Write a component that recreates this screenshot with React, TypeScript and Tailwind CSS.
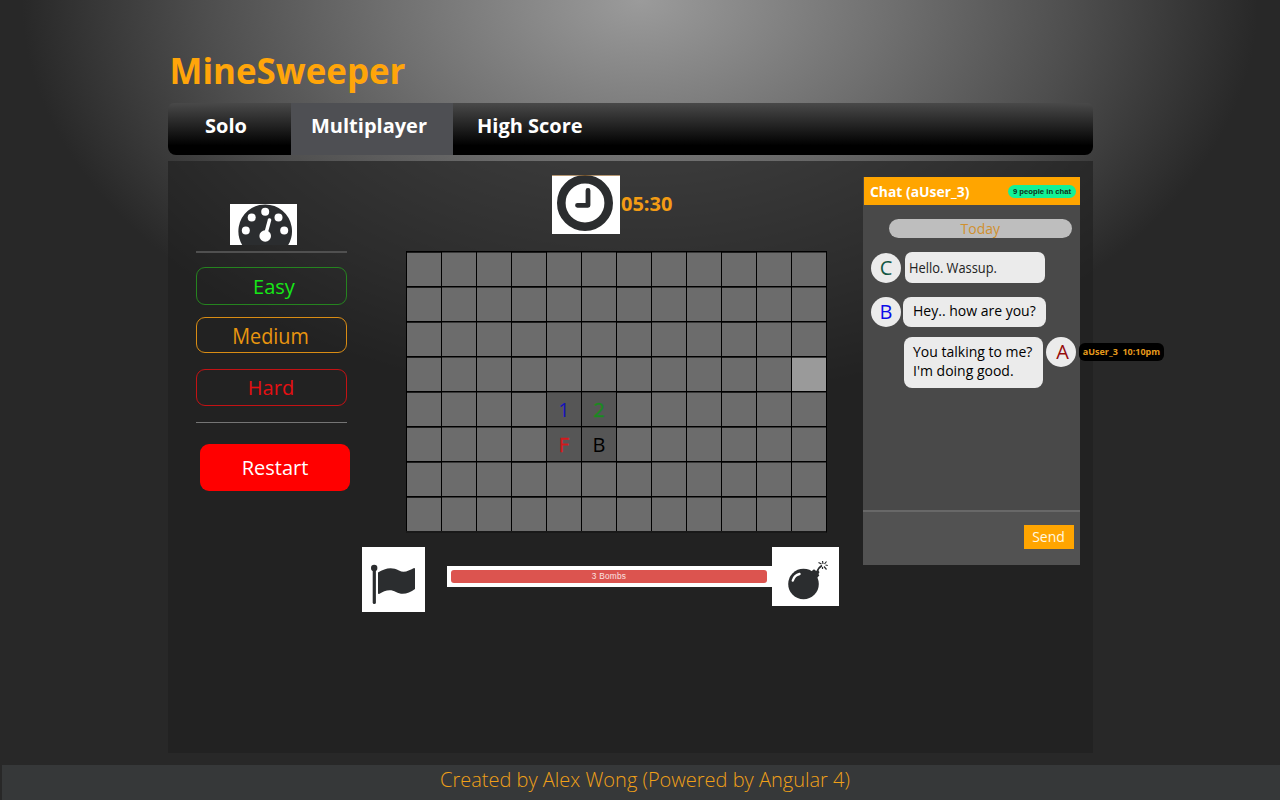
import type { ReactNode } from "react";

const COLS = 12;
const ROWS = 8;

const revealed: Record<string, { label: string; className: string }> = {
  "4-4": { label: "1", className: "bg-[#565656] text-[#1512b8]" },
  "4-5": { label: "2", className: "bg-[#565656] text-[#1a8a1f] [-webkit-text-stroke:0.400px]" },
  "5-4": { label: "F", className: "bg-[#565656] text-[#d4191c] [-webkit-text-stroke:0.400px]" },
  "5-5": { label: "B", className: "bg-[#565656] text-black" },
  "3-11": { label: "", className: "bg-[#9a9a9a]" },
};

function GaugeIcon() {
  return (
    <svg className="block h-[41px] w-[67px] bg-white" viewBox="0 0 67 41">
      <path d="M12.200 41A26.800 26.800 0 1 1 58.200 41Z" fill="#2b2d2f" />
      <g fill="#fff">
        <circle cx="15.800" cy="26.500" r="4" />
        <circle cx="21.700" cy="13.500" r="4" />
        <circle cx="35.200" cy="7.800" r="4" />
        <circle cx="48.500" cy="13.500" r="4" />
        <circle cx="54.200" cy="26.500" r="4" />
        <circle cx="35.200" cy="32" r="5.800" />
      </g>
      <path d="M35.500 31L39.500 16" stroke="#fff" strokeWidth="3.500" strokeLinecap="round" />
    </svg>
  );
}

function ClockIcon() {
  return (
    <svg className="block h-[59px] w-[68px] bg-white" viewBox="0 0 68 59">
      <circle cx="33" cy="28" r="23.700" fill="none" stroke="#2b2d2f" strokeWidth="8.600" />
      <path d="M36 15.500V30.300H25.500" fill="none" stroke="#2b2d2f" strokeWidth="4.800" strokeLinecap="round" strokeLinejoin="round" />
      <path d="M0 .3H68" stroke="#8b5a20" strokeWidth=".8" />
    </svg>
  );
}

function FlagIcon() {
  return (
    <svg className="block h-[65px] w-[63px] bg-white" viewBox="0 0 63 65">
      <circle cx="12.200" cy="21" r="3.200" fill="#2b2d2f" />
      <path d="M12.300 21V55.500" stroke="#2b2d2f" strokeWidth="3.200" strokeLinecap="round" />
      <path d="M16 25.500C23 21 30 19.500 37 23.500C42 26.500 47 23.500 51.500 21.300Q53 20.700 53 22V42C47 46.500 40 48.500 34 45C28 41.500 22 44 17.500 46.800Q16 47.500 16 46Z" fill="#2b2d2f" />
    </svg>
  );
}

function BombIcon() {
  return (
    <svg className="block h-[59px] w-[67px] bg-white" viewBox="0 0 67 59">
      <circle cx="31.500" cy="37" r="15.300" fill="#2b2d2f" />
      <path d="M38.500 25L42 22.300L44.200 24L46 23.200L47.500 25L46.500 27L47.300 28.500L44 32Z" fill="#2b2d2f" />
      <path d="M20.800 33.500Q22.500 28 27.500 27" fill="none" stroke="#fff" strokeWidth="2.400" strokeLinecap="round" />
      <path d="M45 25Q46.500 20.500 50 18.500" fill="none" stroke="#2b2d2f" strokeWidth="1.700" />
      <path d="M46.500 15.500L49.500 17M50.500 14L51 17M54.500 14.500L52.500 17M53.500 18L55.800 18.500M52 19.500L54.500 22.500M50.500 20V22" stroke="#2b2d2f" strokeWidth="1.200" />
    </svg>
  );
}

function Avatar({ className, children }: { className: string; children: ReactNode }) {
  return (
    <div className={`size-[30px] shrink-0 rounded-full bg-[#ebebeb] text-center text-[20px] leading-[29px] ${className}`}>
      {children}
    </div>
  );
}

function Chat() {
  return (
    <aside className="ml-[24px] mt-[16px] flex h-[388px] w-[217px] shrink-0 flex-col bg-[#494949]">
      <header className="ml-[1px] flex h-[28px] items-center justify-between bg-[#ffa500] pl-[6px] pr-[4px]">
        <h2 className="pt-[2px] text-[13.900px] font-bold text-white">Chat (aUser_3)</h2>
        <span className="h-[13px] w-[68px] whitespace-nowrap rounded-full bg-[#12f296] text-center font-['Liberation_Sans',sans-serif] text-[7.700px] font-bold leading-[13px] text-[#10301c]">
          9 people in chat
        </span>
      </header>
      <div className="ml-[25.500px] mt-[14px] h-[19px] w-[183.500px] rounded-full bg-[#bebebe] text-center text-[14px] leading-[20px] text-[#d0902f]">
        Today
      </div>
      <div className="ml-[8px] mt-[14px] flex h-[31px]">
        <Avatar className="mt-[0.500px] text-[#125743]">C</Avatar>
        <p className="ml-[4px] w-[140px] rounded-[7px] bg-[#ebebeb] pl-[4px] text-[14.600px] leading-[31px] text-[#222]">
          <span className="inline-block origin-left scale-x-[0.880]">Hello. Wassup.</span>
        </p>
      </div>
      <div className="ml-[8px] mt-[14px] flex h-[30px]">
        <Avatar className="text-[#0c0ce8]">B</Avatar>
        <p className="ml-[2px] w-[143px] rounded-[8px] bg-[#ebebeb] pl-[10px] text-[14px] leading-[28px] text-black">Hey.. how are you?</p>
      </div>
      <div className="relative ml-[41px] mt-[10px] flex h-[51px]">
        <p className="w-[139px] rounded-[8px] bg-[#ebebeb] pl-[9px] pt-[5px] text-[14px] leading-[19px] text-black">
          You talking to me?
          <br />
          I'm doing good.
        </p>
        <Avatar className="ml-[3px] pl-[3px] text-[#960b0b]">A</Avatar>
        <span className="absolute left-[175px] top-[6px] h-[18px] w-[85px] whitespace-pre rounded-[6px] bg-black text-center text-[9px] font-bold leading-[18px] text-[#e69a1c]">
          aUser_3  10:10pm
        </span>
      </div>
      <footer className="mt-auto flex h-[55.500px] justify-end border-t-2 border-[#686868] bg-[#525252] pr-[6px] pt-[13px]">
        <button className="h-[24px] w-[50px] bg-[#ffa500] pr-[1px] text-[14px] leading-[24px] text-[#fff8e0]">Send</button>
      </footer>
    </aside>
  );
}

function Board() {
  return (
    <div className="ml-[44px] mt-[17px] grid w-[421px] grid-cols-[repeat(12,35px)] border-b-2 border-r border-b-[#191919] border-r-black">
      {Array.from({ length: ROWS * COLS }, (_, i) => {
        const cell = revealed[`${Math.floor(i / COLS)}-${i % COLS}`];
        const edge = (i % COLS) % 3 === 0 ? "shadow-[inset_0_1px_0_#1c1c1c]" : "shadow-[inset_0_1px_0_#383838]";
        return (
          <div
            key={i}
            className={`h-[35px] border-l border-t border-black text-center text-[20px] leading-[36px] ${edge} ${cell ? cell.className : "bg-[#6c6c6c]"}`}
          >
            {cell?.label}
          </div>
        );
      })}
    </div>
  );
}

export default function App() {
  return (
    <div className="flex h-[800px] w-[1280px] flex-col overflow-hidden bg-[#282828] bg-[radial-gradient(618px_400px_at_640px_0px,#9b9b9b,#707070_40%,#4e4e4e_70%,#282828)] font-['Open_Sans','Noto_Sans',sans-serif]">
      <h1 className="ml-[169.500px] mt-[46px] h-[57px] text-[34.900px] font-bold leading-[49px] text-[#ffa50a]">MineSweeper</h1>
      <nav className="ml-[168px] flex h-[52px] w-[925px] overflow-hidden rounded-b-[8px] rounded-t-[6px] bg-[linear-gradient(#494949,#242424_42%,#000_82%)] text-[20px] font-bold leading-[46px] text-white">
        <a className="w-[122.500px] pl-[37px]">Solo</a>
        <a className="w-[162.500px] bg-[#4e4f53] pl-[20.500px]">Multiplayer</a>
        <a className="pl-[24px]">High Score</a>
      </nav>
      <main className="ml-[168px] mt-[6px] flex h-[592px] w-[925px] bg-[rgba(32,32,32,0.680)] pl-[28px]">
        <section className="flex w-[166px] shrink-0 flex-col pt-[43px]">
          <div className="ml-[34px]"><GaugeIcon /></div>
          <div className="mt-[6px] h-[2px] w-[151px] bg-[#505050]" />
          <button className="mt-[14px] h-[38px] w-[151px] rounded-[9px] border border-[#25841f] pl-[5px] text-[20px] leading-[38px] text-[#16e816]">Easy</button>
          <button className="mt-[12px] h-[36px] w-[151px] rounded-[9px] border border-[#d98c14] pr-[2px] text-[22px] leading-[35px] text-[#e8950f]">
            <span className="inline-block scale-x-[0.900]">Medium</span>
          </button>
          <button className="mt-[16px] h-[37px] w-[151px] rounded-[9px] border border-[#c41214] pr-[1px] text-[20px] leading-[35px] text-[#e60f12]">Hard</button>
          <div className="mt-[16px] h-px w-[151px] bg-[#757575]" />
          <button className="ml-[4px] mt-[21px] h-[47px] w-[150px] rounded-[9px] bg-[#ff0000] text-[20px] leading-[47px] text-white">Restart</button>
        </section>
        <section className="flex w-[477px] shrink-0 flex-col pt-[14px]">
          <div className="ml-[190px] flex h-[59px]">
            <ClockIcon />
            <span className="ml-[1px] text-[20px] font-bold leading-[58px] text-[#f39c14]">05:30</span>
          </div>
          <Board />
          <div className="mt-[14px] flex items-start">
            <FlagIcon />
            <div className="ml-[22px] mt-[19px] h-[21px] w-[325px] bg-white py-[4px] pl-[4px] pr-[5px]">
              <div className="h-[13px] rounded-[3px] bg-[#dc544f] text-center font-['Liberation_Sans',sans-serif] text-[8.300px] leading-[12px] tracking-[0.250px] text-[#fbe3e1]">3 Bombs</div>
            </div>
            <BombIcon />
          </div>
        </section>
        <Chat />
      </main>
      <footer className="ml-[2px] mt-[12px] h-[35px] bg-[#363839] pl-[438px] text-[20px] font-light leading-[29px] text-[#f0a018]">
        Created by Alex Wong (Powered by Angular 4)
      </footer>
    </div>
  );
}
